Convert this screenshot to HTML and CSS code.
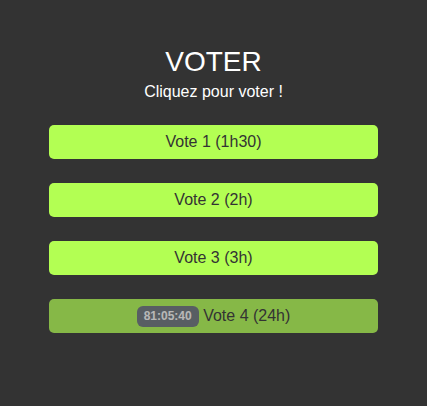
FILE: index.html
```html
<!DOCTYPE html>
<html lang="fr">
<head>
<meta charset="utf-8">
<title>Voter</title>
<link rel="stylesheet" href="styles.css">
</head>
<body>
<main class="page">
  <h1 class="title">VOTER</h1>
  <p class="subtitle">Cliquez pour voter !</p>
  <div class="votes">
    <button class="vote">Vote 1 (1h30)</button>
    <button class="vote">Vote 2 (2h)</button>
    <button class="vote">Vote 3 (3h)</button>
    <button class="vote vote-disabled" disabled><span class="badge">81:05:40</span> Vote 4 (24h)</button>
  </div>
</main>
</body>
</html>
```

FILE: styles.css
```css
html, body {
  margin: 0;
  padding: 0;
  background: #333333;
  height: 100%;
}
body {
  font-family: "Liberation Sans", Arial, sans-serif;
  color: #ffffff;
}
.page {
  display: flex;
  flex-direction: column;
  align-items: center;
  padding-top: 46px;
}
.title {
  margin: 0;
  font-size: 28px;
  font-weight: normal;
  line-height: 32px;
}
.subtitle {
  margin: 4px 0 0;
  font-size: 16px;
  line-height: 19px;
}
.votes {
  display: flex;
  flex-direction: column;
  gap: 24px;
  width: 329px;
  margin-top: 24px;
}
.vote {
  height: 34px;
  border: none;
  border-radius: 5px;
  background: #b3ff53;
  color: #333333;
  font-family: "Liberation Sans", Arial, sans-serif;
  font-size: 16px;
  padding: 0;
  display: flex;
  align-items: center;
  justify-content: center;
  white-space: pre;
}
.vote-disabled {
  opacity: 0.65;
}
.badge {
  display: inline-block;
  background: #6c757d;
  color: #ffffff;
  font-size: 12px;
  font-weight: bold;
  line-height: 14px;
  padding: 3.5px 7px;
  border-radius: 6px;
}
```
